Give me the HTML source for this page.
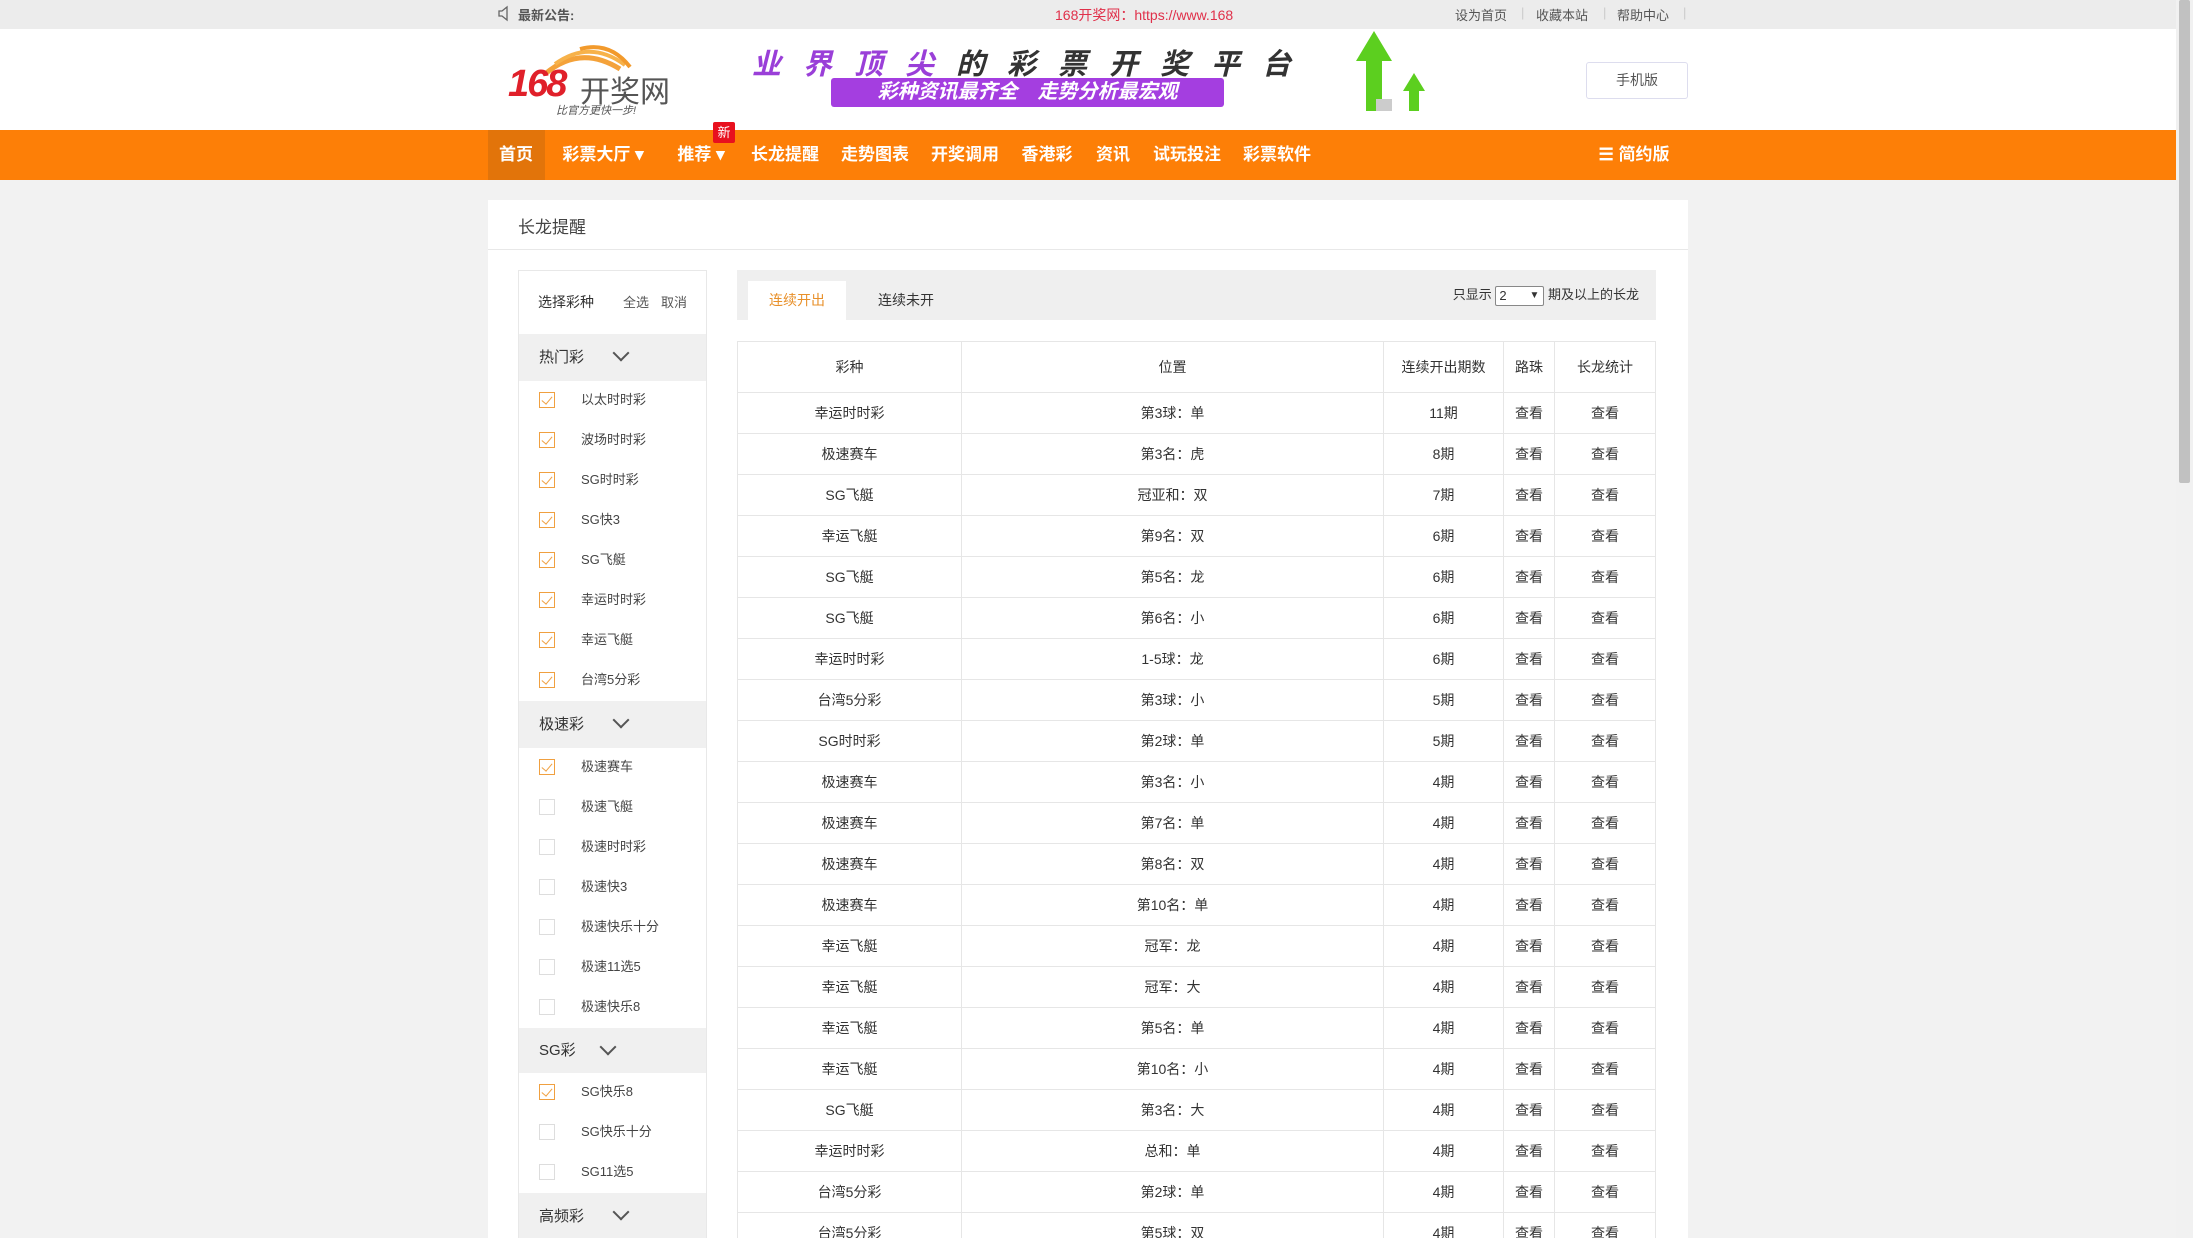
<!DOCTYPE html>
<html style="width:2193px;height:1238px;overflow:hidden"><head><meta charset="utf-8">
<style>
*{margin:0;padding:0;box-sizing:border-box}
body{width:2193px;height:1238px;overflow:hidden;background:#f2f2f2;font-family:"Liberation Sans","Noto Sans CJK SC",sans-serif;color:#333;position:relative}
.abs{position:absolute}
#top{left:0;top:0;width:2176px;height:29px;background:#ececec;font-size:13px;color:#555}
#hdr{left:0;top:29px;width:2176px;height:101px;background:#fff}
#nav{left:0;top:130px;width:2176px;height:50px;background:#fd7f07}
.ni{position:absolute;top:0;line-height:50px;color:#fff;font-size:17px;font-weight:bold;transform:translateX(-50%);white-space:nowrap}
#sb{left:2176px;top:0;width:17px;height:1238px;background:#f1f1f1}
#panel{left:488px;top:200px;width:1200px;height:1038px;background:#fff}
#clip{position:absolute;left:0;top:0;width:2193px;height:1238px;overflow:hidden}
table{border-collapse:collapse;position:absolute;left:737px;top:341px;width:919px;font-size:14px;color:#333}
td,th{border:1px solid #e6e6e6;text-align:center;font-weight:normal;height:41px;padding:0}
th{height:51px}
.side{left:518px;top:270px;width:189px;height:968px;border:1px solid #e8e8e8;border-bottom:none;background:#fff;overflow:hidden}
.gh{height:47px;background:#f0f0f0;font-size:15px;line-height:47px;padding-left:20px;position:relative}
.gh i{position:absolute;left:96px;top:13px;width:12px;height:12px;border-right:2px solid #555;border-bottom:2px solid #555;transform:rotate(45deg)}
.it{height:40px;font-size:13px;line-height:38px;padding-left:62px;position:relative;color:#444}
.it b{position:absolute;left:20px;top:11px;width:16px;height:16px;border:1px solid #ddd}
.it b.c{border-color:#f0a040}
.it b.c:after{content:"";position:absolute;left:4px;top:1px;width:5px;height:9px;border-right:1.5px solid #f0a040;border-bottom:1.5px solid #f0a040;transform:rotate(40deg)}
</style></head><body><div id="clip">
<div id="top" class="abs">
 <svg class="abs" style="left:497px;top:5px" width="16" height="17" viewBox="0 0 16 17"><path d="M2 6h3l5-4v13l-5-4H2z" fill="none" stroke="#666" stroke-width="1.3"/></svg>
 <span class="abs" style="left:518px;top:5px;font-weight:bold;color:#555">最新公告:</span>
 <span class="abs" style="left:1055px;top:5px;color:#e0304a;font-size:14px">168开奖网：https://www.168</span>
 <span class="abs" style="left:1455px;top:5px">设为首页</span>
 <span class="abs" style="left:1521px;top:5px;color:#ccc">|</span>
 <span class="abs" style="left:1536px;top:5px">收藏本站</span>
 <span class="abs" style="left:1603px;top:5px;color:#ccc">|</span>
 <span class="abs" style="left:1617px;top:5px">帮助中心</span>
 <span class="abs" style="left:1683px;top:5px;color:#ccc">|</span>
</div>
<div id="hdr" class="abs">
 <svg class="abs" style="left:540px;top:10px" width="100" height="40" viewBox="0 0 100 40"><path d="M5 35Q40 5 80 30" stroke="#f4a23a" stroke-width="5" fill="none"/><path d="M15 25Q50 0 85 26" stroke="#f7b24a" stroke-width="4" fill="none"/><path d="M40 10Q70 2 90 28" stroke="#f29a2c" stroke-width="4" fill="none"/></svg>
 <span class="abs" style="left:508px;top:34px;font-size:38px;font-weight:bold;font-style:italic;color:#e0202a;letter-spacing:-2px">168</span>
 <span class="abs" style="left:580px;top:38px;font-size:30px;color:#555">开奖网</span>
 <span class="abs" style="left:556px;top:73px;font-size:11px;font-style:italic;color:#555">比官方更快一步!</span>
 <div class="abs" style="left:752px;top:12px;font-size:29px;font-weight:bold;font-style:italic;letter-spacing:22px;white-space:nowrap"><span style="color:#9a3fd8">业界顶尖</span><span style="color:#333">的彩票开奖平台</span></div>
 <div class="abs" style="left:831px;top:49px;width:393px;height:29px;background:#a43ee0;border-radius:3px;color:#fff;font-size:20px;font-style:italic;font-weight:bold;line-height:29px;text-align:center;white-space:nowrap">彩种资讯最齐全　走势分析最宏观</div>
 <svg class="abs" style="left:1352px;top:2px" width="80" height="82" viewBox="0 0 80 82"><path d="M22 0L40 30H30V80H14V30H4z" fill="#5ccf1f"/><path d="M62 42L73 60H67V80H57V60H51z" fill="#5ccf1f"/><rect x="24" y="68" width="16" height="12" fill="#ccc"/></svg>
 <div class="abs" style="left:1586px;top:33px;width:102px;height:37px;border:1px solid #dde;border-radius:3px;font-size:14px;color:#555;text-align:center;line-height:35px">手机版</div>
</div>
<div id="nav" class="abs">
 <div class="abs" style="left:488px;top:0;width:57px;height:50px;background:#e2740a"></div>
 <span class="ni" style="left:516px">首页</span>
 <span class="ni" style="left:603px">彩票大厅 ▾</span>
 <span class="ni" style="left:701px">推荐 ▾</span>
 <div class="abs" style="left:713px;top:-8px;width:22px;height:21px;background:#e8101e;color:#fff;font-size:13px;text-align:center;line-height:21px;border-radius:2px">新</div>
 <span class="ni" style="left:785px">长龙提醒</span>
 <span class="ni" style="left:875px">走势图表</span>
 <span class="ni" style="left:965px">开奖调用</span>
 <span class="ni" style="left:1047px">香港彩</span>
 <span class="ni" style="left:1113px">资讯</span>
 <span class="ni" style="left:1187px">试玩投注</span>
 <span class="ni" style="left:1277px">彩票软件</span>
 <span class="ni" style="left:1634px">☰ 简约版</span>
</div>
<div id="sb" class="abs"><div class="abs" style="left:3px;top:0;width:11px;height:483px;background:#c1c1c1;border-radius:2px"></div></div>
<div id="panel" class="abs">
 <div class="abs" style="left:30px;top:13px;font-size:17px;color:#444">长龙提醒</div>
 <div class="abs" style="left:0;top:49px;width:1200px;height:1px;background:#e8e8e8"></div>
</div>
<div class="side abs">
 <div style="height:63px;font-size:14px;line-height:63px;padding-left:19px;position:relative">选择彩种<span class="abs" style="left:104px;font-size:13px;color:#555">全选</span><span class="abs" style="left:142px;font-size:13px;color:#555">取消</span></div>
 <div class="gh">热门彩<i></i></div>
 <div class="it"><b class="c"></b>以太时时彩</div>
 <div class="it"><b class="c"></b>波场时时彩</div>
 <div class="it"><b class="c"></b>SG时时彩</div>
 <div class="it"><b class="c"></b>SG快3</div>
 <div class="it"><b class="c"></b>SG飞艇</div>
 <div class="it"><b class="c"></b>幸运时时彩</div>
 <div class="it"><b class="c"></b>幸运飞艇</div>
 <div class="it"><b class="c"></b>台湾5分彩</div>
 <div class="gh">极速彩<i></i></div>
 <div class="it"><b class="c"></b>极速赛车</div>
 <div class="it"><b></b>极速飞艇</div>
 <div class="it"><b></b>极速时时彩</div>
 <div class="it"><b></b>极速快3</div>
 <div class="it"><b></b>极速快乐十分</div>
 <div class="it"><b></b>极速11选5</div>
 <div class="it"><b></b>极速快乐8</div>
 <div class="gh" style="height:45px;line-height:45px">SG彩<i style="left:83px"></i></div>
 <div class="it"><b class="c"></b>SG快乐8</div>
 <div class="it"><b></b>SG快乐十分</div>
 <div class="it"><b></b>SG11选5</div>
 <div class="gh">高频彩<i></i></div>
</div>
<div class="abs" style="left:737px;top:270px;width:919px;height:50px;background:#efefef">
 <div class="abs" style="left:11px;top:11px;width:98px;height:39px;background:#fff;color:#e8902a;font-size:14px;text-align:center;line-height:39px">连续开出</div>
 <div class="abs" style="left:141px;top:11px;font-size:14px;line-height:39px">连续未开</div>
 <div class="abs" style="right:17px;top:14px;font-size:13px;line-height:22px;white-space:nowrap">只显示 <span style="display:inline-block;width:49px;height:20px;border:1px solid #888;border-radius:2px;vertical-align:middle;background:#fff;line-height:18px;padding-left:3px;position:relative">2<span style="position:absolute;right:4px;font-size:10px">▼</span></span> 期及以上的长龙</div>
</div>
<table>
<colgroup><col style="width:224px"><col style="width:422px"><col style="width:120px"><col style="width:51px"><col></colgroup>
<tr><th>彩种</th><th>位置</th><th>连续开出期数</th><th>路珠</th><th>长龙统计</th></tr>
<tr><td>幸运时时彩</td><td>第3球：单</td><td>11期</td><td>查看</td><td>查看</td></tr>
<tr><td>极速赛车</td><td>第3名：虎</td><td>8期</td><td>查看</td><td>查看</td></tr>
<tr><td>SG飞艇</td><td>冠亚和：双</td><td>7期</td><td>查看</td><td>查看</td></tr>
<tr><td>幸运飞艇</td><td>第9名：双</td><td>6期</td><td>查看</td><td>查看</td></tr>
<tr><td>SG飞艇</td><td>第5名：龙</td><td>6期</td><td>查看</td><td>查看</td></tr>
<tr><td>SG飞艇</td><td>第6名：小</td><td>6期</td><td>查看</td><td>查看</td></tr>
<tr><td>幸运时时彩</td><td>1-5球：龙</td><td>6期</td><td>查看</td><td>查看</td></tr>
<tr><td>台湾5分彩</td><td>第3球：小</td><td>5期</td><td>查看</td><td>查看</td></tr>
<tr><td>SG时时彩</td><td>第2球：单</td><td>5期</td><td>查看</td><td>查看</td></tr>
<tr><td>极速赛车</td><td>第3名：小</td><td>4期</td><td>查看</td><td>查看</td></tr>
<tr><td>极速赛车</td><td>第7名：单</td><td>4期</td><td>查看</td><td>查看</td></tr>
<tr><td>极速赛车</td><td>第8名：双</td><td>4期</td><td>查看</td><td>查看</td></tr>
<tr><td>极速赛车</td><td>第10名：单</td><td>4期</td><td>查看</td><td>查看</td></tr>
<tr><td>幸运飞艇</td><td>冠军：龙</td><td>4期</td><td>查看</td><td>查看</td></tr>
<tr><td>幸运飞艇</td><td>冠军：大</td><td>4期</td><td>查看</td><td>查看</td></tr>
<tr><td>幸运飞艇</td><td>第5名：单</td><td>4期</td><td>查看</td><td>查看</td></tr>
<tr><td>幸运飞艇</td><td>第10名：小</td><td>4期</td><td>查看</td><td>查看</td></tr>
<tr><td>SG飞艇</td><td>第3名：大</td><td>4期</td><td>查看</td><td>查看</td></tr>
<tr><td>幸运时时彩</td><td>总和：单</td><td>4期</td><td>查看</td><td>查看</td></tr>
<tr><td>台湾5分彩</td><td>第2球：单</td><td>4期</td><td>查看</td><td>查看</td></tr>
<tr><td>台湾5分彩</td><td>第5球：双</td><td>4期</td><td>查看</td><td>查看</td></tr>
</table>
</div></body></html>
